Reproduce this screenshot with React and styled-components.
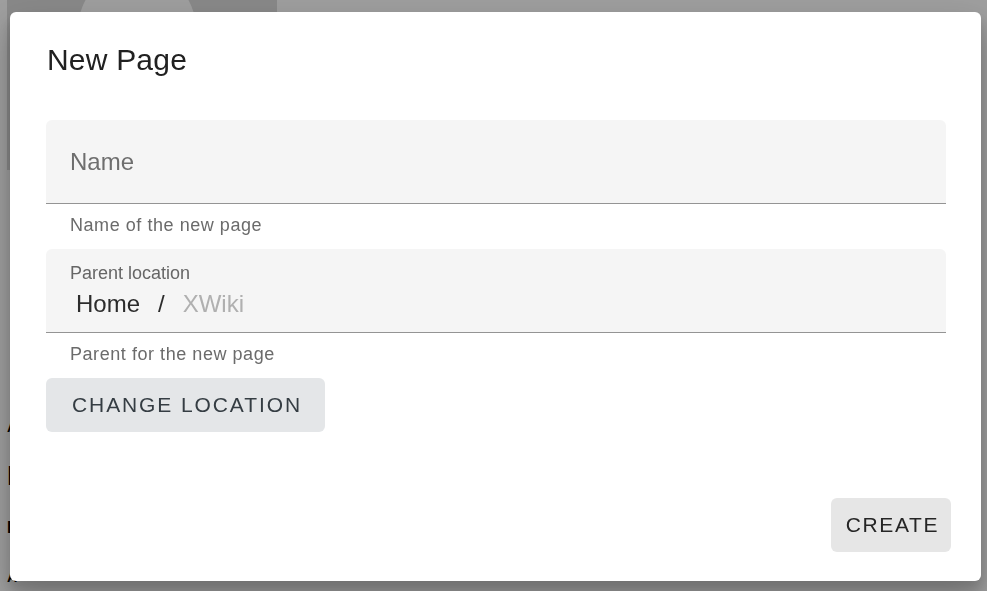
import React from "react";
import styled, { createGlobalStyle } from "styled-components";

const GlobalStyle = createGlobalStyle`
    html, body {
        margin: 0;
        padding: 0;
        width: 100%;
        height: 100%;
        overflow: hidden;
        background: #ffffff;
        font-family: "Liberation Sans", Helvetica, Arial, sans-serif;
    }
`;

// the page that sits under the dialog backdrop
const Page = styled.div`
    padding-left: 7px;
    display: flex;
    flex-direction: column;
`;

const Banner = styled.div`
    width: 270px;
    height: 170px;
    background: #dcdcdc;
    display: flex;
    justify-content: center;
    overflow: hidden;
`;

const Avatar = styled.div`
    width: 118px;
    height: 118px;
    margin-top: -30px;
    margin-right: 10px;
    border-radius: 50%;
    background: #ffffff;
`;

const PageText = styled.div`
    font-size: ${(p) => p.size}px;
    font-weight: 700;
    color: #000;
    line-height: 1;
    margin-top: ${(p) => p.gap}px;
`;

const Backdrop = styled.div`
    position: fixed;
    inset: 0;
    background: rgba(0, 0, 0, 0.38);
    display: flex;
    padding: 12px 6px 10px 10px;
    box-sizing: border-box;
`;

const Dialog = styled.div`
    flex: 1;
    background: #ffffff;
    border-radius: 6px;
    box-shadow: 0px 16px 36px 3px rgba(0, 0, 0, 0.2), 0px 9px 12px 1px rgba(0, 0, 0, 0.14);
    display: flex;
    flex-direction: column;
    color: #212121;
`;

const Title = styled.h2`
    margin: 0;
    padding: 24px 36px 24px 37px;
    font-size: 30px;
    font-weight: 400;
    line-height: 48px;
    letter-spacing: 0.2px;
    color: #212121;
`;

const Content = styled.div`
    padding: 12px 35px 0 36px;
    display: flex;
    flex-direction: column;
    align-items: flex-start;
`;

const Field = styled.div`
    box-sizing: border-box;
    align-self: stretch;
    height: 84px;
    background: #f5f5f5;
    border-radius: 6px 6px 0 0;
    border-bottom: 1px solid #949494;
    padding: ${(p) => (p.filled ? "15px 24px 0" : "0 24px")};
    display: flex;
    flex-direction: column;
    justify-content: ${(p) => (p.filled ? "flex-start" : "center")};
    margin-top: ${(p) => p.top || 0}px;
`;

const Placeholder = styled.span`
    font-size: 24px;
    color: #6e6e6e;
`;

const SmallLabel = styled.span`
    font-size: 18px;
    line-height: 18px;
    color: #666666;
`;

const Crumbs = styled.div`
    display: flex;
    align-items: center;
    margin-top: 10px;
    font-size: 24px;
    line-height: 24px;
`;

const Crumb = styled.span`
    padding: 0 6px;
    color: ${(p) => (p.muted ? "#b0b0b0" : "#2c2c2c")};
`;

const Separator = styled.span`
    margin: 0 12px;
    color: #2c2c2c;
`;

const Helper = styled.p`
    margin: 6px 0 0;
    padding-left: 24px;
    font-size: 18px;
    line-height: 30px;
    letter-spacing: 0.55px;
    color: #6b6b6b;
`;

const Button = styled.button`
    border: none;
    border-radius: 6px;
    height: 54px;
    padding: 0 ${(p) => p.right}px 0 ${(p) => p.left}px;
    font-family: inherit;
    font-size: 21px;
    font-weight: 400;
    letter-spacing: ${(p) => p.spacing}px;
    text-transform: uppercase;
    background: ${(p) => p.bg};
    color: ${(p) => p.fg};
    cursor: pointer;
    margin-top: ${(p) => p.top || 0}px;
`;

const Actions = styled.div`
    margin-top: auto;
    padding: 0 30px 29px;
    display: flex;
    justify-content: flex-end;
`;

export default function App() {
    return (
        <>
            <GlobalStyle />
            <Page>
                <Banner>
                    <Avatar />
                </Banner>
                <PageText size={14} gap={250}>A</PageText>
                <PageText size={28} gap={28}>I</PageText>
                <PageText size={16} gap={30}>I</PageText>
                <PageText size={14} gap={34}>A</PageText>
            </Page>
            <Backdrop>
                <Dialog>
                    <Title>New Page</Title>
                    <Content>
                        <Field>
                            <Placeholder>Name</Placeholder>
                        </Field>
                        <Helper>Name of the new page</Helper>
                        <Field filled top={9}>
                            <SmallLabel>Parent location</SmallLabel>
                            <Crumbs>
                                <Crumb>Home</Crumb>
                                <Separator>/</Separator>
                                <Crumb muted>XWiki</Crumb>
                            </Crumbs>
                        </Field>
                        <Helper>Parent for the new page</Helper>
                        <Button bg="#e4e6e8" fg="#353d43" left={26} right={23} spacing={1.9} top={9}>
                            Change location
                        </Button>
                    </Content>
                    <Actions>
                        <Button bg="#e6e6e6" fg="#262626" left={15} right={12} spacing={1.6}>
                            Create
                        </Button>
                    </Actions>
                </Dialog>
            </Backdrop>
        </>
    );
}
